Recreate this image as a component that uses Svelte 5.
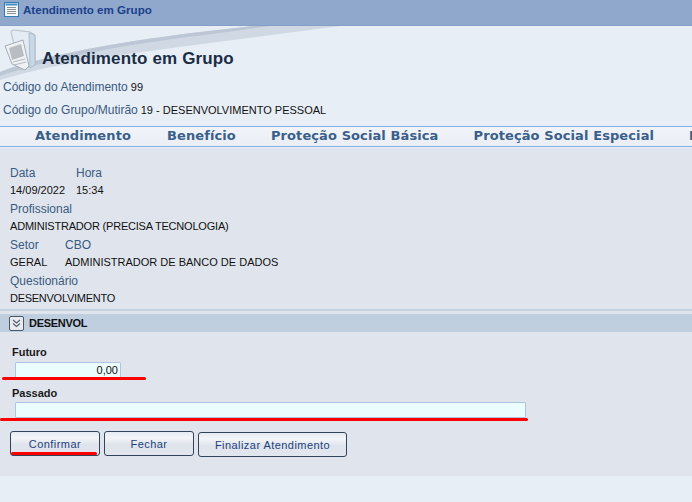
<script>
  const nav = ['Atendimento', 'Benefício', 'Proteção Social Básica', 'Proteção Social Especial', 'Inclusão'];
</script>

<div class="page">
  <header class="titlebar">
    <svg class="ticon" width="15" height="15" viewBox="0 0 15 15">
      <rect x="0.5" y="0.5" width="14" height="14" fill="#f4f6f8" stroke="#2f7fb5"/>
      <rect x="1.5" y="1.5" width="12" height="2" fill="#3f8fc4"/>
      <path d="M3 5.5h9M3 7.5h9M3 9.5h9M3 11.5h9" stroke="#8c8f94" stroke-width="1"/>
    </svg>
    <span>Atendimento em Grupo</span>
  </header>

  <section class="head">
    <svg class="swoosh" width="692" height="60" viewBox="0 0 692 60">
      <path d="M0 46 C33 33 100 18 200 6 L253 0 L340 0 C280 8 200 18 100 32 C50 40 20 48 0 54 Z" fill="#d0d8e4"/>
      <path d="M0 46 C33 33 100 18 200 6 L253 0 L270 0 L205 9 C110 20 40 36 0 50 Z" fill="#bcc6d4"/>
    </svg>
    <div class="h-row">
      <svg class="folder" width="37" height="44" viewBox="0 0 37 44">
        <path d="M8 3 Q8 1 11 1 L27 3 L32 6 L32 36 L17 41 Z" fill="#e4ebf3" stroke="#b4bfca"/>
        <path d="M26 4 L32 6 L32 36 L27 39 Z" fill="#c9d8e6" stroke="#aebccb"/>
        <path d="M2 17 L20 11 L26 37 L22 41 L9 35 Z" fill="#eef1f4" stroke="#a3aeb9"/>
        <path d="M6 19 L18 15 L21 27 L9 31 Z" fill="#b8bdc3"/>
        <path d="M10 33 L22 30M11 36 L23 33" stroke="#b4b9bf"/>
      </svg>
      <h1>Atendimento em Grupo</h1>
    </div>
    <div class="code"><span class="lab">Código do Atendimento</span><span class="val">99</span></div>
    <div class="code c2"><span class="lab">Código do Grupo/Mutirão</span><span class="val">19 - DESENVOLVIMENTO PESSOAL</span></div>
  </section>

  <nav class="nav">
    {#each nav as item}
      <span>{item}</span>
    {/each}
  </nav>

  <main class="content">
    <div class="info">
      <div class="cols">
        <div class="f1"><div class="lab">Data</div><div class="val">14/09/2022</div></div>
        <div><div class="lab">Hora</div><div class="val">15:34</div></div>
      </div>
      <div><div class="lab">Profissional</div><div class="val tight">ADMINISTRADOR (PRECISA TECNOLOGIA)</div></div>
      <div class="cols">
        <div class="f2"><div class="lab">Setor</div><div class="val">GERAL</div></div>
        <div><div class="lab">CBO</div><div class="val">ADMINISTRADOR DE BANCO DE DADOS</div></div>
      </div>
      <div><div class="lab">Questionário</div><div class="val tighter">DESENVOLVIMENTO</div></div>
    </div>

    <div class="sep"></div>
    <div class="section">
      <span class="toggle">
        <svg width="13" height="13" viewBox="0 0 13 13" fill="none" stroke="#55606c" stroke-width="1.2">
          <path d="M3 3 L6.5 6 L10 3M3 6.5 L6.5 9.5 L10 6.5"/>
        </svg>
      </span>
      <b>DESENVOL</b>
    </div>

    <div class="form">
      <label class="fl" for="futuro">Futuro</label>
      <input id="futuro" class="in short" value="0,00" />
      <div class="ul u1"></div>
      <label class="fl l2" for="passado">Passado</label>
      <input id="passado" class="in long" />
      <div class="ul u2"></div>
      <div class="buttons">
        <button class="btn first">Confirmar<i></i></button>
        <button class="btn">Fechar</button>
        <button class="btn last">Finalizar Atendimento</button>
      </div>
    </div>
  </main>
</div>

<style>
  :global(body) { margin: 0; background: #e7eef6; }
  .page { width: 692px; height: 502px; overflow: hidden; font-family: "Liberation Sans", Arial, sans-serif; font-size: 11px; background: #e7eef6; }
  .titlebar { height: 26px; box-sizing: border-box; background: #8fa8cb; border-bottom: 1px solid #84a0c8; display: flex; align-items: center; gap: 4px; padding: 0 0 6px 4px; color: #1c3f8c; font-weight: bold; font-size: 11.6px; }
  .ticon { flex: none; }
  .head { height: 100px; position: relative; padding-left: 3px; color: #111; }
  .swoosh { position: absolute; left: 0; top: 0; }
  .h-row { position: relative; display: flex; align-items: flex-start; height: 55px; box-sizing: border-box; padding-top: 3px; }
  .folder { flex: none; margin-right: 2px; }
  h1 { margin: 20px 0 0; font-size: 17px; font-weight: bold; color: #1b2c45; letter-spacing: 0.15px; line-height: 20px; }
  .code { position: relative; display: flex; gap: 3px; line-height: 13px; }
  .c2 { margin-top: 10px; }
  .lab { color: #3a5a80; font-size: 12px; }
  .val { color: #111; }
  .nav { height: 21px; box-sizing: border-box; padding: 0 0 2px 35px; border-top: 1px solid #84aee8; border-bottom: 1px solid #84aee8; background: linear-gradient(#f1f4f9, #eaeef5); display: flex; align-items: center; gap: 35px; white-space: nowrap; font-family: "DejaVu Sans", Verdana, sans-serif; font-size: 13px; font-weight: bold; letter-spacing: 0.1px; color: #3a5f8a; }
  .nav span:first-child { margin-right: 1px; }
  .content { margin-top: 1px; height: 328px; background: #e0e5ed; padding-top: 19px; box-sizing: border-box; }
  .info { padding-left: 10px; display: flex; flex-direction: column; gap: 6px; }
  .cols { display: flex; }
  .f1 { width: 66px; }
  .f2 { width: 55px; }
  .info .lab, .info .val { line-height: 13px; }
  .info .val { margin-top: 4px; }
  .tight { letter-spacing: -0.2px; }
  .tighter { letter-spacing: -0.27px; }
  .sep { height: 2px; background: #c3d1e1; margin-top: 4px; }
  .section { height: 18px; margin-top: 3px; background: #bfcfe0; display: flex; align-items: center; gap: 5px; padding-left: 9px; color: #111; }
  .section b { letter-spacing: -0.3px; }
  .toggle { width: 13px; height: 13px; border: 1px solid #4a5662; border-radius: 2px; background: #e8ecf2; display: flex; }
  .form { padding: 14px 0 0 15px; position: relative; }
  .fl { display: block; margin-left: -3px; font-weight: bold; color: #1a1a1a; line-height: 13px; }
  .l2 { margin-top: 9px; }
  .in { display: block; box-sizing: border-box; height: 16px; margin: 2px 0 0; padding: 0 2px; border: 1px solid #b0c4e0; border-radius: 1px; background: #ecfdfd; font: 11px "Liberation Sans", Arial, sans-serif; color: #111; text-align: right; outline: none; }
  .short { width: 106px; margin-top: 3px; }
  .long { width: 511px; }
  .ul { position: absolute; height: 3px; background: #f00; border-radius: 2px; }
  .u1 { left: 2px; top: 45px; width: 144px; }
  .u2 { left: 0; top: 86px; width: 528px; }
  .buttons { display: flex; align-items: flex-start; gap: 4px; margin: 13px 0 0 -5px; }
  .btn { position: relative; width: 90px; height: 25px; box-sizing: border-box; border: 1px solid #33445a; border-radius: 3px; background: linear-gradient(#e6ebf2 0, #f3f5f8 25%, #dfe4ec 55%, #e2e6ee 100%); font: 11px "Liberation Sans", Arial, sans-serif; letter-spacing: 0.45px; color: #1c3f7c; padding: 0; }
  .btn i { position: absolute; left: 0; right: 2px; bottom: 0; height: 3px; background: #f00; border-radius: 2px; }
  .last { width: 149px; margin-top: 1px; }
</style>
